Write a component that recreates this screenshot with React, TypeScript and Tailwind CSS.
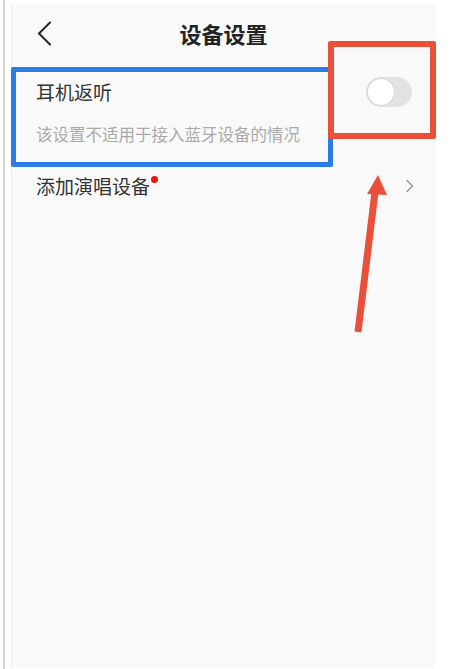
const font = { fontFamily: '"Noto Sans CJK SC", "Noto Sans", sans-serif' };

const Toggle = () => (
  <div className="w-[46px] h-[30px] rounded-full bg-[#e2e2e2] p-[2px] flex items-center">
    <div className="w-[26px] h-[26px] rounded-full bg-white shadow-[0_0_0_1px_#d6d6d6]" />
  </div>
);

export default function App() {
  return (
    <div className="relative w-[453px] h-[669px] bg-white flex overflow-hidden" style={font}>
      {/* left edge line of the screenshot frame */}
      <div className="ml-[3px] w-[2px] h-full bg-[#d4d4d4]" />

      {/* phone screen */}
      <div className="ml-[6px] mt-[4px] w-[424px] h-[664px] bg-[#f9f9f9] border-l border-[#ececec] flex flex-col">
        {/* header */}
        <div className="relative h-[58px] flex items-center justify-center">
          <svg className="absolute left-[24px] top-[17px]" width="16" height="25" viewBox="0 0 16 25">
            <polyline points="14,1.5 3,12.5 14,23.5" fill="none" stroke="#222" strokeWidth="2" strokeLinecap="round" strokeLinejoin="round" />
          </svg>
          <h1 className="text-[22px] leading-[28px] font-bold text-[#222]">设备设置</h1>
        </div>

        {/* 耳机返听 */}
        <div className="pl-[24px] pr-[23px] pt-[15px]">
          <div className="flex items-center justify-between">
            <span className="text-[19px] leading-[24px] text-[#333]">耳机返听</span>
            <Toggle />
          </div>
          <p className="mt-[16px] text-[16.5px] leading-[22px] text-[#aaaaaa]">该设置不适用于接入蓝牙设备的情况</p>
        </div>

        {/* 添加演唱设备 */}
        <div className="pl-[24px] pr-[20px] mt-[29px] flex items-center justify-between">
          <div className="flex items-start">
            <span className="text-[19px] leading-[24px] text-[#333]">添加演唱设备</span>
            <span className="mt-[2px] ml-[1px] w-[7px] h-[7px] rounded-full bg-[#f01414]" />
          </div>
          <svg width="10" height="14" viewBox="0 0 10 14">
            <polyline points="2,1.5 7.5,7 2,12.5" fill="none" stroke="#9a9a9a" strokeWidth="1.6" strokeLinecap="round" strokeLinejoin="round" />
          </svg>
        </div>
      </div>

      {/* annotation: blue box */}
      <div className="absolute left-[11px] top-[67px] w-[322px] h-[100px] border-[5px] border-[#2a7de6] rounded-[2px]" />
      {/* annotation: red box */}
      <div className="absolute left-[328px] top-[41px] w-[108px] h-[98px] border-[6px] border-[#ea4f3a] rounded-[2px]" />
      {/* annotation: arrow */}
      <svg className="absolute left-0 top-0" width="453" height="669" viewBox="0 0 453 669">
        <line x1="358" y1="332" x2="375" y2="192" stroke="#ea4f3a" strokeWidth="7" />
        <polygon points="378,175 367,194 387,195" fill="#ea4f3a" />
      </svg>
    </div>
  );
}
